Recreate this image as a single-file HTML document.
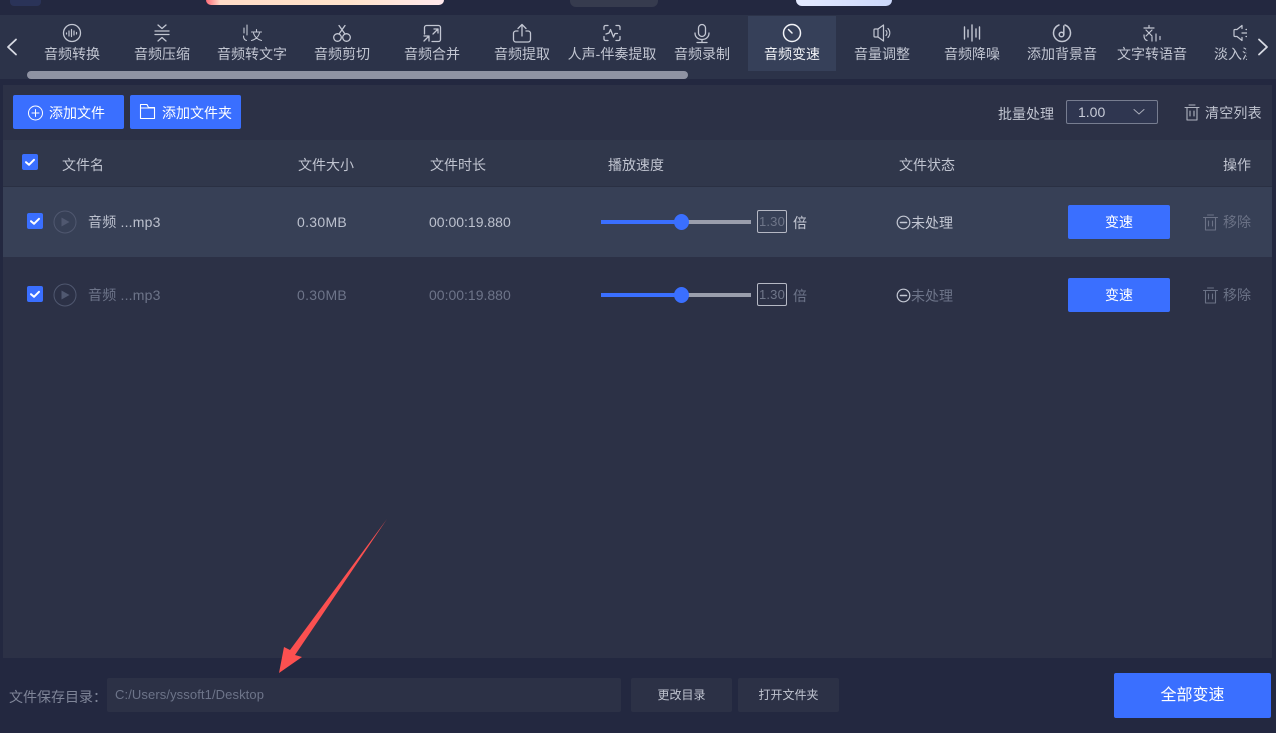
<!DOCTYPE html>
<html lang="zh"><head><meta charset="utf-8"><title>音频变速</title>
<style>
*{box-sizing:border-box}
html,body{margin:0;padding:0}
body{width:1276px;height:733px;position:relative;overflow:hidden;background:#232840;font-family:"Liberation Sans","Noto Sans CJK SC",sans-serif;font-size:14px;color:#c8ccd8}
.a{position:absolute}
.t{position:absolute;white-space:nowrap;line-height:18px;height:18px}
.c{transform:translateX(-50%)}
.tab{position:absolute;top:0;width:88px;height:56px;text-align:center}
.tab span{position:absolute;left:-10px;right:-10px;top:29px;line-height:18px;color:#c2c6d2;font-size:14px;white-space:nowrap}
.tab svg{position:absolute;left:33px;top:7px}
svg{display:block;fill:none;stroke-linecap:round;stroke-linejoin:round}
.btn{position:absolute;background:#3a6fff;border-radius:2px;color:#fff;text-align:center}
.cb{position:absolute;width:16px;height:16px;background:#3a6fff;border-radius:2px}
.dim{color:#6d7489}
.lt{color:#c0c4d0}
.nm{letter-spacing:.2px}
</style></head><body>
<!-- top strip -->
<div class="a" style="left:10px;top:0;width:31px;height:6px;background:#2a3358;border-radius:0 0 4px 4px"></div>
<div class="a" style="left:206px;top:0;width:238px;height:5px;background:linear-gradient(90deg,#ff6b78 0,#ffdcc8 6%,#ffe3cc 60%,#ffe8ec 100%);border-radius:0 0 6px 6px"></div>
<div class="a" style="left:570px;top:0;width:88px;height:7px;background:#363b4e;border-radius:0 0 6px 6px"></div>
<div class="a" style="left:796px;top:0;width:96px;height:6px;background:linear-gradient(90deg,#e4eaff,#ccd8fb);border-radius:0 0 6px 6px"></div>

<!-- tab bar -->
<div class="a" style="left:0;top:15px;width:1276px;height:64px;background:#2c3349"></div>
<svg class="a" style="left:5px;top:38px" width="14" height="18" stroke="#d8dbe4" stroke-width="1.800"><path d="M11 1.500L3 9L11 16.500"/></svg>
<svg class="a" style="left:1256px;top:38px" width="14" height="18" stroke="#d8dbe4" stroke-width="1.800"><path d="M3 1.500L11 9L3 16.500"/></svg>
<div class="a" style="left:748px;top:16px;width:88px;height:55px;background:#364059"></div>
<div class="a" style="left:27px;top:16px;width:1220px;height:56px;overflow:hidden">
<div class="tab" style="left:1px"><svg width="22" height="22" stroke="#c2c6d2" stroke-width="1.300"><circle cx="11" cy="10" r="8.500"/><path d="M5.500 10v1M8 8v5M10.500 6.500v7M13 8v4M15.500 9.500v1.500" stroke-width="1.200"/></svg><span>音频转换</span></div>
<div class="tab" style="left:91px"><svg width="22" height="22" stroke="#c2c6d2" stroke-width="1.300"><path d="M7 2l4 3.500L15 2M4 8h14M4 11.500h14M7 18l4-3.500 4 3.500"/></svg><span>音频压缩</span></div>
<div class="tab" style="left:181px"><svg width="22" height="22" stroke="#c2c6d2" stroke-width="1.100"><path d="M6 2v10M3 5v5M2.500 13c0 2.500 1.200 4 3 4.500M10.500 9h10M15.500 6.500V9M12.500 10c1 3.500 4 6.500 8 7.500M18.500 10c-1 3.500-4 6.500-8 7.500"/></svg><span>音频转文字</span></div>
<div class="tab" style="left:271px"><svg width="22" height="22" stroke="#c2c6d2" stroke-width="1.300"><circle cx="6.500" cy="14.500" r="3.800"/><circle cx="15.500" cy="14.500" r="3.800"/><path d="M8 11L14 2.500M14 11L8 2.500"/></svg><span>音频剪切</span></div>
<div class="tab" style="left:361px"><svg width="22" height="22" stroke="#c2c6d2" stroke-width="1.300"><path d="M3.500 11V4.500a2 2 0 0 1 2-2h12a2 2 0 0 1 2 2v12a2 2 0 0 1-2 2H11M13 6h4v4M17 6l-5 5M3 13h5v5M8 13l-5 5"/></svg><span>音频合并</span></div>
<div class="tab" style="left:451px"><svg width="22" height="22" stroke="#c2c6d2" stroke-width="1.300"><path d="M7 8H5a2.500 2.500 0 0 0-2.500 2.500v6A2.500 2.500 0 0 0 5 19h12a2.500 2.500 0 0 0 2.500-2.500v-6A2.500 2.500 0 0 0 17 8h-2M11 13V2M7 5.500L11 1.500l4 4"/></svg><span>音频提取</span></div>
<div class="tab" style="left:541px"><svg width="22" height="22" stroke="#c2c6d2" stroke-width="1.300"><path d="M3 6.500V4a1.500 1.500 0 0 1 1.500-1.500H7M15 2.500h2.500A1.500 1.500 0 0 1 19 4v2.500M3 13.500V16a1.500 1.500 0 0 0 1.500 1.500H7M15 17.500h2.500A1.500 1.500 0 0 0 19 16v-2.500M5 11l3-1 1.500-3.500 3 7.500 1.500-3.500h2.500"/></svg><span>人声-伴奏提取</span></div>
<div class="tab" style="left:631px"><svg width="22" height="22" stroke="#c2c6d2" stroke-width="1.300"><rect x="7.500" y="1.500" width="7" height="12" rx="3.500"/><path d="M4 10c0 4 3 6.500 7 6.500s7-2.500 7-6.500M11 16.500v3M6 19.500h10"/></svg><span>音频录制</span></div>
<div class="tab" style="left:721px"><svg width="22" height="22" stroke="#f2f3f7" stroke-width="1.500"><circle cx="11" cy="10" r="8.500"/><path d="M7.500 6.500L11 10"/></svg><span style="color:#f2f3f7">音频变速</span></div>
<div class="tab" style="left:811px"><svg width="22" height="22" stroke="#c2c6d2" stroke-width="1.200"><path d="M4 6h3v8H4a1 1 0 0 1-1-1V7a1 1 0 0 1 1-1zM7 6l5.500-4v16L7 14M15 7.500c1.300 1.500 1.300 3.500 0 5M17 5.500c2.400 2.800 2.400 6.200 0 9"/></svg><span>音量调整</span></div>
<div class="tab" style="left:901px"><svg width="22" height="22" stroke="#c2c6d2" stroke-width="1.400"><path d="M3.500 4v12M7 7v7M11 2v16M15 6v8M18.500 4v12"/></svg><span>音频降噪</span></div>
<div class="tab" style="left:991px"><svg width="22" height="22" stroke="#c2c6d2" stroke-width="1.500"><path d="M8 2a8.500 8.500 0 1 0 6 0"/><circle cx="10.500" cy="11.500" r="2.300"/><path d="M12.800 11.500V3"/></svg><span>添加背景音</span></div>
<div class="tab" style="left:1081px"><svg width="22" height="22" stroke="#c2c6d2" stroke-width="1.200"><path d="M3 5h10M8 2.500V5M5 7l6 6M11 7l-6 6M3 12c0 3 1 5 3 5.500M11 14v4M15 11v7M19 13.500v3"/></svg><span>文字转语音</span></div>
<div class="tab" style="left:1171px"><svg width="22" height="22" stroke="#c2c6d2" stroke-width="1.200"><path d="M11 2.500L6 6.500H4a1 1 0 0 0-1 1v5a1 1 0 0 0 1 1h2l5 4M11 2.500v3M11 14.500v3M11 10h8M15 6.500h4M15 13.500h4"/></svg><span>淡入淡出</span></div>
</div>
<div class="a" style="left:27px;top:71px;width:661px;height:8px;background:#8f93a3;border-radius:4px"></div>

<!-- main panel -->
<div class="a" style="left:3px;top:85px;width:1269px;height:573px;background:#2c3146"></div>

<!-- toolbar -->
<div class="btn" style="left:13px;top:95px;width:111px;height:34px"></div>
<svg class="a" style="left:28px;top:105px" width="16" height="16" stroke="#fff" stroke-width="1"><circle cx="7.500" cy="8" r="7"/><path d="M7.500 4.500v7M4 8h7"/></svg>
<div class="t" style="left:49px;top:104px;color:#fff;font-size:14px">添加文件</div>
<div class="btn" style="left:130px;top:95px;width:111px;height:34px"></div>
<svg class="a" style="left:139px;top:103px" width="17" height="17" stroke="#fff" stroke-width="1.100"><path d="M1.500 15.500V1.500h6.500l1.500 3H15.500v11zM1.500 5h14"/></svg>
<div class="t" style="left:162px;top:104px;color:#fff;font-size:14px">添加文件夹</div>

<div class="t lt" style="left:998px;top:105px;font-size:14px">批量处理</div>
<div class="a" style="left:1066px;top:100px;width:92px;height:24px;border:1px solid #777d90;border-radius:2px;background:#2f3650"></div>
<div class="t" style="left:1078px;top:103px;font-size:14px;color:#c8ccd8">1.00</div>
<svg class="a" style="left:1133px;top:108px" width="12" height="8" stroke="#a9adba" stroke-width="1"><path d="M1 1.500L6 6l5-4.500"/></svg>
<svg class="a" style="left:1184px;top:104px" width="16" height="17" stroke="#b0b4c0" stroke-width="1.100"><path d="M1 3.500h14M5 1h6M3 3.500V16h10V3.500M6 7v5M10 7v5"/></svg>
<div class="t lt" style="left:1205px;top:104px;font-size:14px;letter-spacing:.2px">清空列表</div>

<!-- header -->
<div class="a" style="left:3px;top:140px;width:1269px;height:46px;background:#30374b"></div>
<div class="a" style="left:3px;top:186px;width:1269px;height:1px;background:#2a3043"></div>
<div class="cb" style="left:22px;top:154px"><svg width="16" height="16" stroke="#fff" stroke-width="2"><path d="M4 8.200l3 2.600 5-5"/></svg></div>
<div class="t lt" style="left:62px;top:156px">文件名</div>
<div class="t lt" style="left:298px;top:156px">文件大小</div>
<div class="t lt" style="left:430px;top:156px">文件时长</div>
<div class="t lt" style="left:608px;top:156px">播放速度</div>
<div class="t lt" style="left:899px;top:156px">文件状态</div>
<div class="t lt" style="left:1223px;top:156px">操作</div>

<!-- row 1 -->
<div class="a" style="left:3px;top:187px;width:1269px;height:70px;background:#374056"></div>
<div class="cb" style="left:27px;top:213px"><svg width="16" height="16" stroke="#fff" stroke-width="2"><path d="M4 8.200l3 2.600 5-5"/></svg></div>
<svg class="a" style="left:53px;top:210px" width="24" height="24"><circle cx="12" cy="12" r="11" stroke="#505870" stroke-width="1"/><path d="M8.500 7.500v9l8-4.500z" fill="#505870"/></svg>
<div class="t nm" style="left:88px;top:213px;font-size:14px;color:#bcc1ce">音频 ...mp3</div>
<div class="t" style="left:297px;top:213px;font-size:14px;letter-spacing:.3px;color:#bcc1ce">0.30MB</div>
<div class="t" style="left:429px;top:213px;font-size:14px;color:#bcc1ce">00:00:19.880</div>
<div class="a" style="left:601px;top:220px;width:150px;height:4px;background:#9a9eac"></div>
<div class="a" style="left:601px;top:220px;width:80px;height:4px;background:#3a6fff"></div>
<div class="a" style="left:674px;top:214px;width:15px;height:16px;border-radius:50%;background:#3a6fff"></div>
<div class="a" style="left:757px;top:210px;width:30px;height:23px;border:1px solid #b5b8c4;border-radius:2px"></div>
<div class="t c" style="left:772px;top:213px;font-size:13px;letter-spacing:.2px;color:#6f7689">1.30</div>
<div class="t" style="left:793px;top:214px;color:#c4c8d4">倍</div>
<svg class="a" style="left:896px;top:215px" width="15" height="15" stroke="#c4c8d4" stroke-width="1.200"><circle cx="7.500" cy="7.500" r="6.300"/><path d="M4.500 7.500h6" stroke-width="1.600"/></svg>
<div class="t" style="left:911px;top:214px;color:#c4c8d4">未处理</div>
<div class="btn" style="left:1068px;top:205px;width:102px;height:34px;line-height:34px;font-size:14px">变速</div>
<svg class="a" style="left:1203px;top:214px" width="15" height="17" stroke="#6b7286" stroke-width="1.100"><path d="M.5 3.500h14M4.500 1h6M2.500 3.500V16h10V3.500M5.500 7v5M9.500 7v5"/></svg>
<div class="t" style="left:1223px;top:213px;font-size:14px;color:#6b7286">移除</div>

<!-- row 2 -->
<div class="cb" style="left:27px;top:286px"><svg width="16" height="16" stroke="#fff" stroke-width="2"><path d="M4 8.200l3 2.600 5-5"/></svg></div>
<svg class="a" style="left:53px;top:283px" width="24" height="24"><circle cx="12" cy="12" r="11" stroke="#505870" stroke-width="1"/><path d="M8.500 7.500v9l8-4.500z" fill="#505870"/></svg>
<div class="t dim nm" style="left:88px;top:286px;font-size:14px">音频 ...mp3</div>
<div class="t dim" style="left:297px;top:286px;font-size:14px;letter-spacing:.3px">0.30MB</div>
<div class="t dim" style="left:429px;top:286px;font-size:14px">00:00:19.880</div>
<div class="a" style="left:601px;top:293px;width:150px;height:4px;background:#9a9eac"></div>
<div class="a" style="left:601px;top:293px;width:80px;height:4px;background:#3a6fff"></div>
<div class="a" style="left:674px;top:287px;width:15px;height:16px;border-radius:50%;background:#3a6fff"></div>
<div class="a" style="left:757px;top:283px;width:30px;height:23px;border:1px solid #b5b8c4;border-radius:2px"></div>
<div class="t c" style="left:772px;top:286px;font-size:13px;letter-spacing:.2px;color:#6f7689">1.30</div>
<div class="t dim" style="left:793px;top:287px">倍</div>
<svg class="a" style="left:896px;top:288px" width="15" height="15" stroke="#c4c8d4" stroke-width="1.200"><circle cx="7.500" cy="7.500" r="6.300"/><path d="M4.500 7.500h6" stroke-width="1.600"/></svg>
<div class="t dim" style="left:911px;top:287px">未处理</div>
<div class="btn" style="left:1068px;top:278px;width:102px;height:34px;line-height:34px;font-size:14px">变速</div>
<svg class="a" style="left:1203px;top:287px" width="15" height="17" stroke="#6b7286" stroke-width="1.100"><path d="M.5 3.500h14M4.500 1h6M2.500 3.500V16h10V3.500M5.500 7v5M9.500 7v5"/></svg>
<div class="t" style="left:1223px;top:286px;font-size:14px;color:#6b7286">移除</div>

<!-- footer -->
<div class="t" style="left:9px;top:688px;font-size:14px;color:#7f8598">文件保存目录：</div>
<div class="a" style="left:107px;top:678px;width:514px;height:34px;background:#2c3146;border-radius:2px"></div>
<div class="t" style="left:115px;top:686px;font-size:13px;letter-spacing:.1px;color:#6d7489">C:/Users/yssoft1/Desktop</div>
<div class="a" style="left:631px;top:678px;width:101px;height:34px;background:#2c3146;border-radius:2px;text-align:center;line-height:34px;font-size:12px;color:#c0c4d0">更改目录</div>
<div class="a" style="left:738px;top:678px;width:101px;height:34px;background:#2c3146;border-radius:2px;text-align:center;line-height:34px;font-size:12px;color:#c0c4d0">打开文件夹</div>
<div class="btn" style="left:1114px;top:673px;width:157px;height:45px;line-height:45px;font-size:16px">全部变速</div>

<!-- annotation arrow -->
<svg class="a" style="left:0;top:510px" width="420" height="223"><path d="M387 9L290 140 284 137 279 163 302 147 295 145Z" fill="#fb5050"/></svg>
</body></html>
